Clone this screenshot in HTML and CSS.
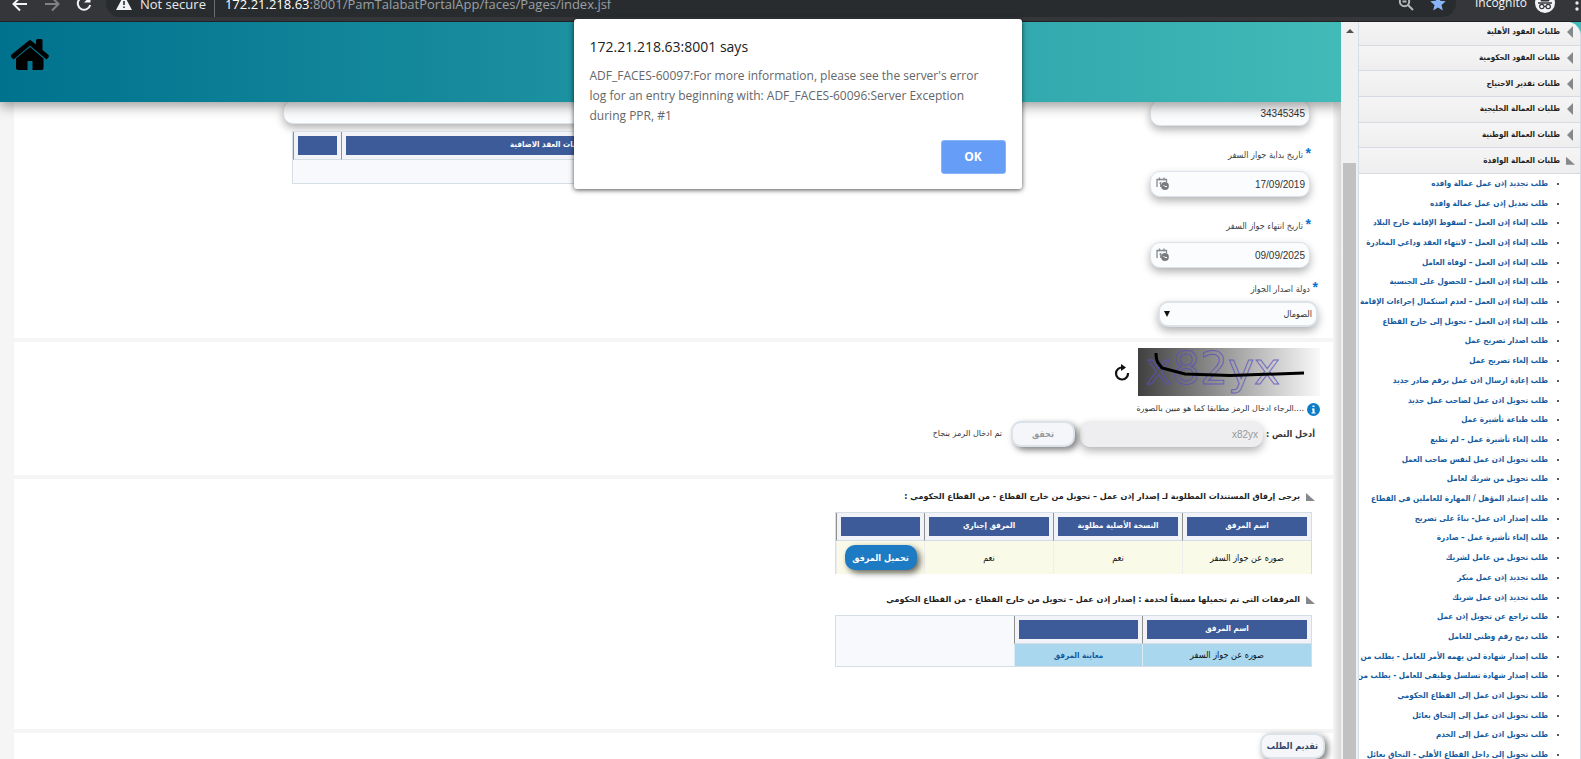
FILE: index.html
```html
<!DOCTYPE html>
<html lang="ar">
<head>
<meta charset="utf-8">
<title>PAM Talabat Portal</title>
<link rel="stylesheet" href="styles.css">
</head>
<body>
<div class="toolbar">
  <div class="nav">
    <button class="icon-btn" aria-label="Back"><svg width="18" height="18" viewBox="0 0 18 18" fill="none" stroke="#f1f3f4" stroke-width="2"><path d="M16 9H3M9 2.500 2.500 9 9 15.500"/></svg></button>
    <button class="icon-btn" aria-label="Forward"><svg width="18" height="18" viewBox="0 0 18 18" fill="none" stroke="#808386" stroke-width="2"><path d="M2 9h13M9 2.500 15.500 9 9 15.500"/></svg></button>
    <button class="icon-btn" aria-label="Reload"><svg width="18" height="18" viewBox="0 0 18 18" fill="none" stroke="#f1f3f4" stroke-width="2"><path d="M14 4.500A6.300 6.300 0 1 0 15.200 10"/><path d="M15.500 1v6.500H9z" fill="#f1f3f4" stroke="none"/></svg></button>
  </div>
  <div class="omnibox">
    <svg class="warn" width="16" height="16" viewBox="0 0 16 16"><path d="M8 0 16 15H0z" fill="#f1f3f4"/><path d="M7.200 6h1.600v4H7.200zM7.200 11.500h1.600V13H7.200z" fill="#282c2e"/></svg>
    <span class="secure">Not secure</span>
    <span class="url"><b>172.21.218.63</b>:8001/PamTalabatPortalApp/faces/Pages/index.jsf</span>
    <svg class="mag" width="16" height="16" viewBox="0 0 16 16" fill="none" stroke="#b4b7ba" stroke-width="2"><circle cx="6.500" cy="6.500" r="4.700"/><path d="m10 10 5 5M4.500 6.500h4"/></svg>
    <svg class="star" width="16" height="16" viewBox="0 0 16 16"><path d="m8 .5 2.200 5.200 5.600.5-4.300 3.700 1.300 5.600L8 12.500l-4.800 3 1.300-5.600L.2 6.200l5.600-.5z" fill="#8ab4f8"/></svg>
  </div>
  <span class="incognito">Incognito</span>
  <svg class="spy" width="20" height="20" viewBox="0 0 20 20"><circle cx="10" cy="10" r="10" fill="#f1f3f4"/><path d="M3 10h14" stroke="#35363a" stroke-width="1.500"/><circle cx="6.800" cy="13.500" r="2.200" fill="none" stroke="#35363a" stroke-width="1.200"/><circle cx="13.200" cy="13.500" r="2.200" fill="none" stroke="#35363a" stroke-width="1.200"/><path d="M9 13.500h2M6 8l1.500-5h5L14 8z" stroke="#35363a" fill="#35363a"/></svg>
  <svg class="dots" width="4" height="16" viewBox="0 0 4 16" fill="#e8eaed"><circle cx="2" cy="2" r="1.700"/><circle cx="2" cy="8" r="1.700"/><circle cx="2" cy="14" r="1.700"/></svg>
</div>

<div class="page">
  <main class="content">
    <header class="banner">
      <a href="#" aria-label="Home"><svg width="38" height="32" viewBox="0 0 38 32"><path d="M0 16 18 1.500Q19 .5 20 1.500l5 4V1.500Q25 0 26.500 0H30q1.500 0 1.500 1.500V11l6 5q1 1-.5 3l-1.500 1.500L19 6.500 2.500 20.500.5 18.500Q-.5 17 0 16z"/><path d="M5 19.500 19 8l13.500 11.500V29q0 2-2 2H21.500v-9h-5v9H7q-2 0-2-2z"/></svg></a>
    </header>

    <section class="panel details" dir="rtl">
      <div class="fields">
        <input class="field" type="text" value="34345345" aria-label="رقم جواز السفر">
        <label for="start"><i>*</i> تاريخ بداية جواز السفر</label>
        <div class="date"><input class="field" id="start" type="text" value="17/09/2019"><button class="cal" aria-label="التقويم"><svg width="13" height="13" viewBox="0 0 13 13"><path d="M1 10V2.500h9.500V5M3.500.500v3M8 .500v3M3.500 6.500l1.200-.8V10" fill="none" stroke="#85898c" stroke-width="1.300"/><circle cx="9" cy="9" r="3.900" fill="#777b7e"/><path d="M7.500 8l1.500 1.500h2" fill="none" stroke="#fff"/></svg></button></div>
        <label for="end"><i>*</i> تاريخ انتهاء جواز السفر</label>
        <div class="date"><input class="field" id="end" type="text" value="09/09/2025"><button class="cal" aria-label="التقويم"><svg width="13" height="13" viewBox="0 0 13 13"><path d="M1 10V2.500h9.500V5M3.500.500v3M8 .500v3M3.500 6.500l1.200-.8V10" fill="none" stroke="#85898c" stroke-width="1.300"/><circle cx="9" cy="9" r="3.900" fill="#777b7e"/><path d="M7.500 8l1.500 1.500h2" fill="none" stroke="#fff"/></svg></button></div>
        <div class="country">
          <label for="country"><i>*</i> دولة اصدار الجواز</label>
          <div class="pick"><select class="field" id="country"><option>الصومال</option></select><span class="caret"></span></div>
        </div>
      </div>
      <div class="extra">
        <input class="field wide" type="text" aria-label="ملاحظات">
        <table class="grid extras">
          <tr><th class="c-main"><div>بيانات العقد الاضافية</div></th><th><div></div></th></tr>
          <tr><td class="none" colspan="2"></td></tr>
        </table>
      </div>
    </section>

    <section class="panel captcha" dir="rtl">
      <div class="line">
        <svg class="code" width="182" height="48" viewBox="0 0 182 48"><defs><linearGradient id="g"><stop offset="0" stop-color="#404040"/><stop offset="1" stop-color="#fafafa"/></linearGradient></defs><rect width="182" height="48" fill="url(#g)"/><text x="8" y="36" direction="ltr" class="code-text">x82yx</text><path d="M18 5q0 8 3 11l3 4 23 6 45 1.500L166 25" fill="none" stroke="#000" stroke-width="3"/></svg>
        <button class="icon-btn" aria-label="تحديث"><svg width="16" height="17" viewBox="0 0 16 17"><path d="M8.500 3.500A6 6 0 1 0 14 9" fill="none" stroke="#111" stroke-width="2.200"/><path d="M7 0l5 3.500L7 7z" fill="#111"/></svg></button>
      </div>
      <div class="hint"><svg width="13" height="13" viewBox="0 0 13 13"><circle cx="6.500" cy="6.500" r="6.500" fill="#0a7cc8"/><path d="M5.500 2.500h2v1.500h-2zM5 5.500h2.500v4H8.500v1h-4v-1h1V6.500H5z" fill="#fff"/></svg><span>....الرجاء ادخال الرمز مطابقا كما هو مبين بالصورة</span></div>
      <div class="verify">
        <label for="code">أدخل النص :</label>
        <input class="field" id="code" type="text" value="x82yx" disabled>
        <button class="pill" disabled>تحقق</button>
        <span>تم ادخال الرمز بنجاح</span>
      </div>
    </section>

    <section class="panel files" dir="rtl">
      <h2><span class="open"></span>يرجى إرفاق المستندات المطلوبة لـ إصدار إذن عمل – تحويل من خارج القطاع - من القطاع الحكومي :</h2>
      <table class="grid needed">
        <tr><th class="c1"><div>اسم المرفق</div></th><th class="c1"><div>النسخة الأصلية مطلوبة</div></th><th class="c1"><div>المرفق إجباري</div></th><th><div></div></th></tr>
        <tr class="cream"><td>صوره عن جواز السفر</td><td>نعم</td><td>نعم</td><td class="up"><button class="upload">تحميل المرفق</button></td></tr>
      </table>
      <h2><span class="open"></span>المرفقات التي تم تحميلها مسبقاً لخدمة : إصدار إذن عمل – تحويل من خارج القطاع - من القطاع الحكومي</h2>
      <table class="grid loaded">
        <tr><th class="c2"><div>اسم المرفق</div></th><th class="c3"><div></div></th><td class="blank" rowspan="2"></td></tr>
        <tr class="sky"><td>صوره عن جواز السفر</td><td><a href="#">معاينة المرفق</a></td></tr>
      </table>
    </section>

    <section class="panel submit" dir="rtl"><button class="pill">تقديم الطلب</button></section>
  </main>

  <div class="scroll"><span class="up-arrow"></span><span class="thumb"></span></div>

  <aside class="side">
    <nav class="menu" dir="rtl">
      <div class="groups">
        <a href="#"><span class="closed"></span>طلبات العقود الأهلية</a>
        <a href="#"><span class="closed"></span>طلبات العقود الحكومية</a>
        <a href="#"><span class="closed"></span>طلبات تقدير الاحتياج</a>
        <a href="#"><span class="closed"></span>طلبات العمالة الخليجية</a>
        <a href="#"><span class="closed"></span>طلبات العمالة الوطنية</a>
        <a href="#"><span class="open"></span>طلبات العمالة الوافدة</a>
      </div>
      <ul>
        <li><a href="#">طلب تجديد إذن عمل عمالة وافده</a></li>
        <li><a href="#">طلب تعديل إذن عمل عمالة وافده</a></li>
        <li><a href="#">طلب إلغاء إذن العمل – لسقوط الإقامة خارج البلاد</a></li>
        <li><a href="#">طلب إلغاء إذن العمل – لانتهاء العقد وداعي المغادرة</a></li>
        <li><a href="#">طلب إلغاء إذن العمل – لوفاة العامل</a></li>
        <li><a href="#">طلب إلغاء إذن العمل – للحصول على الجنسية</a></li>
        <li><a href="#">طلب إلغاء إذن العمل – لعدم استكمال إجراءات الإقامة</a></li>
        <li><a href="#">طلب إلغاء إذن العمل – تحويل إلى خارج القطاع</a></li>
        <li><a href="#">طلب اصدار تصريح عمل</a></li>
        <li><a href="#">طلب إلغاء تصريح عمل</a></li>
        <li><a href="#">طلب إعادة ارسال اذن عمل برقم صادر جديد</a></li>
        <li><a href="#">طلب تحويل اذن عمل لصاحب عمل جديد</a></li>
        <li><a href="#">طلب طباعة تأشيرة عمل</a></li>
        <li><a href="#">طلب إلغاء تأشيرة عمل – لم تطبع</a></li>
        <li><a href="#">طلب تحويل اذن عمل لنفس صاحب العمل</a></li>
        <li><a href="#">طلب تحويل من شريك لعامل</a></li>
        <li><a href="#">طلب إعتماد المؤهل / المهارة للعاملين في القطاع</a></li>
        <li><a href="#">طلب إصدار اذن عمل- بناءً على تصريح</a></li>
        <li><a href="#">طلب إلغاء تأشيرة عمل – صادرة</a></li>
        <li><a href="#">طلب تحويل من عامل لشريك</a></li>
        <li><a href="#">طلب تجديد إذن عمل مبكر</a></li>
        <li><a href="#">طلب تجديد إذن عمل شريك</a></li>
        <li><a href="#">طلب تراجع عن تحويل إذن عمل</a></li>
        <li><a href="#">طلب دمج رقم وطني للعامل</a></li>
        <li><a href="#">طلب إصدار شهادة لمن يهمه الأمر للعامل - يطلب من</a></li>
        <li><a href="#">طلب إصدار شهادة تسلسل وظيفي للعامل - يطلب من</a></li>
        <li><a href="#">طلب تحويل اذن عمل إلى القطاع الحكومي</a></li>
        <li><a href="#">طلب تحويل اذن عمل إلى إلتحاق بعائل</a></li>
        <li><a href="#">طلب تحويل اذن عمل إلى الخدم</a></li>
        <li><a href="#">طلب تحويل إلى داخل القطاع الأهلي - التحاق بعائل</a></li>
      </ul>
    </nav>
  </aside>
</div>

<div class="dialog" role="alertdialog" aria-labelledby="dt">
  <h1 id="dt">172.21.218.63:8001 says</h1>
  <p>ADF_FACES-60097:For more information, please see the server's error log for an entry beginning with: ADF_FACES-60096:Server Exception during PPR, #1</p>
  <button>OK</button>
</div>
</body>
</html>
```

FILE: styles.css
```css
* { box-sizing: border-box; }
body { margin: 0; height: 100vh; overflow: hidden; display: flex; flex-direction: column; font: 9px/14px "DejaVu Sans Condensed", "DejaVu Sans", sans-serif; color: #333; }
button { font: inherit; padding: 0; border: 0; background: none; }
a { text-decoration: none; color: inherit; }

.toolbar { flex: none; height: 22px; display: flex; align-items: flex-start; background: #35363a; border-bottom: 1px solid #202124; overflow: hidden; font: 13px/20px "Open Sans", "Noto Sans", sans-serif; padding-left: 11px; }
.nav { display: flex; gap: 14px; width: 95px; margin-top: -5px; }
.icon-btn { display: flex; }
.omnibox { flex: 1; height: 17px; display: flex; background: #282c2e; border-radius: 0 0 14px 14px; padding: 0 10px; color: #9aa0a6; }
.omnibox svg { margin-top: -5px; }
.omnibox span { margin-top: -6px; white-space: nowrap; }
.secure { color: #e8eaed; padding: 0 8px; }
.url { flex: 1; border-left: 1px solid #6b6e71; padding-left: 10px; }
.url b { color: #fff; font-weight: 400; }
.mag { margin-right: 16px; }
.incognito { color: #f1f3f4; font-size: 12px; margin: -7px 8px 0 19px; }
.spy { margin-top: -7px; }
.dots { margin: -5px 2px 0 20px; }

.page { flex: 1; min-height: 0; display: flex; }
.content { flex: 1; min-width: 0; overflow: hidden; display: flex; flex-direction: column; gap: 4px; padding-right: 8px; padding-left: 14px; background: linear-gradient(to left, #d8d8d8, #f5f5f5 8px); }
.banner { flex: none; height: 80px; margin: 0 -8px -4px -14px; padding: 17px 11px; background: linear-gradient(to right, #00728e, #41bab8); box-shadow: 0 4px 12px rgba(0,0,0,.4); position: relative; z-index: 1; }
.panel { flex: none; background: #fff; }

.field { display: block; width: 100%; height: 26px; border: 1px solid #dce2e7; border-radius: 10px; background: #fbfcfe; box-shadow: 0 4px 8px rgba(0,0,0,.3); font: 10px/14px "Liberation Sans", "DejaVu Sans Condensed", sans-serif; color: #333; padding: 0 4px; }
.details { height: 238px; display: flex; justify-content: space-between; padding: 0 23px 8px 269px; margin-top: -2px; overflow: hidden; }
.details > * { flex: none; }
.fields { width: 160px; }
.fields label { display: block; margin: 22px -1px 9px 0; color: #444; }
.fields i { font: 700 14px/10px "Liberation Sans", sans-serif; color: #0572ce; }
.date { position: relative; }
.cal { position: absolute; left: 6px; top: 6px; display: flex; }
.country { margin: -7px -8px 0 8px; }
.country .field { border-width: 2px; }
.fields .country label { margin: 21px 0 5px; }
.pick { position: relative; }
.pick select { appearance: none; font: 9px/14px "DejaVu Sans Condensed", "DejaVu Sans", sans-serif; }
.caret { position: absolute; left: 6px; top: 10px; border: 3px solid transparent; border-top: 6px solid #111; border-bottom: 0; }
.extra { width: 517px; }
.wide { height: 24px; margin-bottom: 7px; }
.extras { width: 461px; margin-right: 47px; }

.grid { border-spacing: 0; border: 1px solid #d5dde5; background: #f2f3f8; table-layout: fixed; font: inherit; color: #111; }
.grid th, .grid td { padding: 0; text-align: center; }
.grid th { padding: 4px; border-left: 1px solid #8f918f; border-bottom: 1px solid #d5dde5; }
.grid th div { height: 19px; background: #3d5b99; color: #fff; font-size: 8px; line-height: 17px; }
.c-main { width: 411px; }
.grid .none { height: 23px; background: #f7f9fd; }

.captcha { height: 133px; padding: 6px 13px 0; }
.line { display: flex; align-items: center; gap: 8px; }
.code-text { font: 44px "DejaVu Sans", sans-serif; fill: none; stroke: #5a50c0; stroke-opacity: .8; }
.hint { display: flex; align-items: center; gap: 3px; margin: 6px 0 5px; }
.hint span, .verify span { font: 8px/14px "DejaVu Sans", sans-serif; }
.verify { display: flex; align-items: center; gap: 5px; padding-right: 5px; }
.verify label { font-weight: 700; width: 47px; white-space: nowrap; }
.verify .field { width: 183px; background: #eeeef0; border-color: #eeeef0; color: #999; }
.verify span { margin-right: 4px; }
.pill { height: 26px; width: 64px; border: 2px solid #dbe2e8; border-radius: 10px; background: #f4f6f9; box-shadow: 3px 3px 6px rgba(0,0,0,.5); font-weight: 700; color: #2f4668; }
.pill:disabled { color: #999; }

.files { height: 250px; padding: 11px 21px 0; }
.open { width: 9px; height: 8px; background: #85898c; clip-path: polygon(0 0, 100% 100%, 0 100%); }
.files h2 { display: flex; align-items: center; gap: 6px; margin: 0 -3px 8px 0; font: 700 8px/14px "DejaVu Sans", sans-serif; color: #222; }
.files .grid { width: 477px; }
.c1 { width: 129px; }
.c2 { width: 169px; }
.c3 { width: 128px; }
.cream td { height: 33px; background: #fafae8; border-left: 1px solid #eee; }
.needed { margin-bottom: 19px; border-bottom: 0; }
.grid .up { text-align: center; vertical-align: top; padding-top: 4px; }
.upload { width: 72px; height: 25px; border-radius: 10px; background: #1c7bc2; color: #fff; font-weight: 700; box-shadow: 3px 3px 6px rgba(0,0,0,.6); }
.sky td { height: 22px; background: #a9d8ee; border-left: 1px solid #dcebf3; }
.sky a { color: #145a9e; font-weight: 700; font-size: 8px; }
.grid .blank { background: #f7f9fd; }
.submit { flex: 1; padding-right: 8px; }
.submit .pill { width: 65px; }

.scroll { flex: none; width: 18px; background: #f1f1f1; border-right: 1px solid #d5dde5; padding: 7px 2px 0; display: flex; flex-direction: column; align-items: center; gap: 130px; }
.up-arrow { border: 4px solid transparent; border-bottom: 4px solid #505050; border-top: 0; }
.thumb { flex: 1; width: 13px; background: #c1c1c1; }

.side { flex: none; width: 222px; background: #41bab8; overflow: hidden; }
.menu { height: 100%; display: flex; flex-direction: column; background: #fff; border-radius: 0 14px 0 0; overflow: hidden; font-size: 8px; font-weight: 700; border-right: 1px solid #d5dde5; }
.groups { flex: none; height: 154px; margin-top: -2px; display: grid; grid-auto-rows: 1fr; }
.groups a { display: flex; align-items: center; gap: 6px; padding-right: 7px; color: #222; background: linear-gradient(#f5f5f5, #eee); border-bottom: 1px solid #d5dbe0; }
.closed { border: 6px solid transparent; border-right: 6px solid #85898c; border-left: 0; margin-left: 1px; }
.groups .open { margin-right: -2px; }
.menu ul { flex: 1; margin: 0 0 -6px; padding: 0 32px 0 0; display: grid; grid-auto-rows: 1fr; align-items: center; white-space: nowrap; color: #222; }
.menu li a { color: #145a9e; }

.dialog { position: absolute; z-index: 2; left: calc(50% - 217px); top: 19px; width: 448px; padding: 18px 16px 15px; background: #fff; border-radius: 3px; box-shadow: 0 1px 5px rgba(0,0,0,.7); display: flex; flex-direction: column; font: 12px/20px "Open Sans", "Noto Sans", sans-serif; color: #646669; }
.dialog h1 { margin: 0 0 9px; font-size: 14px; line-height: 20px; font-weight: 400; color: #202124; }
.dialog p { margin: 0 0 14px; padding-right: 16px; }
.dialog button { align-self: flex-end; width: 65px; height: 34px; border-radius: 3px; background: #669df6; border: 1px solid #8ab4f8; color: #fff; font-weight: 700; }
```
